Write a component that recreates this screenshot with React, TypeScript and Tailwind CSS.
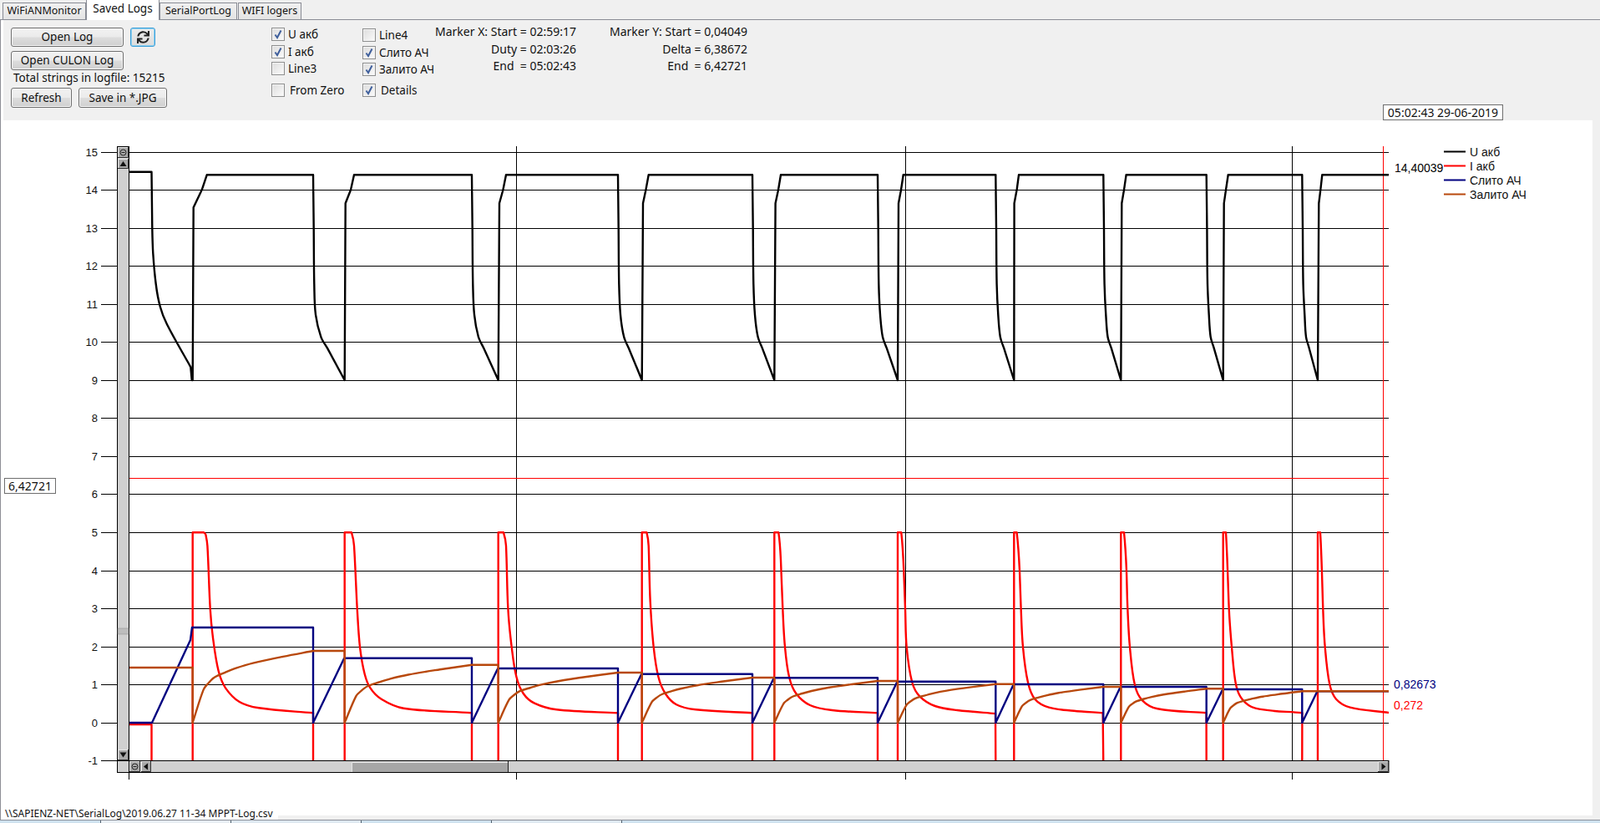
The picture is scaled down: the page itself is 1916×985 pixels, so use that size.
import { FaSync } from "react-icons/fa";

type P = [number, number];

const rises = [230.7, 412.7, 596.7, 768.7, 927.3, 1075, 1214.3, 1342.3, 1464.7, 1578];
const falls = [375, 565, 740, 901, 1051, 1192.3, 1321.3, 1444.7, 1559.3, 1663];
const blueLevels = [751, 787.7, 800, 806.7, 811.3, 815.7, 819, 822, 825, 827.3];
const orangeLevels = [779, 795.7, 805, 811, 815, 818.7, 822, 824.3, 827.3];

const redShapes: P[][] = [
  [[43, 52], [47, 60], [53, 100], [63, 325], [73, 430], [93, 550], [118, 610], [168, 660], [238, 682], [433, 700]],
  [[28, 52], [34, 100], [45, 325], [55, 463], [72, 560], [92, 610], [132, 650], [212, 683], [457, 700]],
  [[22, 52], [28, 100], [35, 325], [48, 463], [65, 570], [90, 630], [130, 665], [210, 688], [430, 700]],
  [[20, 52], [24, 100], [30, 300], [42, 463], [59, 570], [84, 630], [124, 670], [194, 688], [397, 700]],
  [[18, 52], [23, 150], [30, 325], [38, 463], [53, 570], [78, 630], [128, 672], [208, 690], [371, 700]],
  [[16, 52], [22, 190], [27, 325], [32, 463], [52, 590], [79, 640], [134, 675], [214, 690], [351, 702]],
  [[13, 52], [20, 190], [25, 325], [32, 463], [50, 590], [75, 650], [125, 680], [215, 692], [319, 700]],
  [[14, 52], [20, 190], [24, 325], [32, 463], [50, 600], [77, 655], [132, 685], [307, 700]],
  [[13, 52], [21, 325], [31, 463], [46, 598], [68, 650], [116, 683], [284, 700]],
  [[12, 52], [19, 325], [26, 463], [43, 598], [66, 650], [116, 680], [255, 699]],
];

const riseDx: number[][] = [
  [3, 33, 51], [3, 22, 34], [4, 17, 28], [4, 14, 24], [4, 14, 23],
  [3, 12, 20], [1, 10, 17], [3, 11, 19], [3, 10, 18], [4, 10, 16],
];

const orangeShape: P[] = [
  [0, 0], [0.09, 0.46], [0.13, 0.55], [0.18, 0.63], [0.27, 0.7], [0.36, 0.76], [0.5, 0.83], [0.75, 0.92], [1, 1],
];

// Chord-length Hermite through the points; continues the current path from pts[0].
function smooth(pts: P[]): string {
  let out = "";
  const tangent = (i: number): P => {
    const a = pts[Math.max(0, i - 1)];
    const b = pts[Math.min(pts.length - 1, i + 1)];
    const dx = b[0] - a[0];
    const dy = b[1] - a[1];
    const l = Math.hypot(dx, dy) || 1;
    return [dx / l, dy / l];
  };
  for (let i = 0; i < pts.length - 1; i++) {
    const p = pts[i];
    const q = pts[i + 1];
    const l = Math.hypot(q[0] - p[0], q[1] - p[1]) / 3;
    const t0 = tangent(i);
    const t1 = tangent(i + 1);
    out += ` C${(p[0] + t0[0] * l).toFixed(1)},${(p[1] + t0[1] * l).toFixed(1)} ${(q[0] - t1[0] * l).toFixed(1)},${(q[1] - t1[1] * l).toFixed(1)} ${q[0].toFixed(1)},${q[1].toFixed(1)}`;
  }
  return out;
}

const y10 = (v: number) => 190 + v / 3;

function blackPath(): string {
  let d = "M154.5,205.7 L181.5,205.7";
  const z6 = ([x, y]: P): P => [130 + x / 3, 170 + y / 3];
  d += smooth(
    ([[155, 108], [157, 310], [160, 400], [170, 510], [185, 590], [210, 655], [295, 808]] as P[]).map(z6)
  );
  d += " L229.7,455";
  rises.forEach((r, i) => {
    const dx = riseDx[i];
    d += ` L${r},455 L${(r + dx[0] / 3).toFixed(1)},${y10(i === 0 ? 175 : 160).toFixed(1)}`;
    d += ` L${(r + dx[1] / 3).toFixed(1)},${y10(112).toFixed(1)} L${(r + dx[2] / 3).toFixed(1)},209.3`;
    const f = falls[i];
    d += ` L${f},209.3`;
    if (i < rises.length - 1) {
      const nr = rises[i + 1];
      const G = nr - f;
      d += smooth([
        [f, 209.3], [f + 0.7, y10(250)], [f + 1.3, y10(450)], [f + 3, y10(560)],
        [f + 0.25 * G, y10(640)], [f + 0.45 * G, y10(680)],
      ]);
      d += ` L${nr},455`;
    }
  });
  return d;
}

function redPath(): string {
  let d = "M154.5,867 L181.5,867 L181.5,914";
  rises.forEach((r, i) => {
    const sh = redShapes[i];
    const toXY = ([dx, y]: P): P => [r + dx / 3, 620 + y / 3];
    d += ` L${r},914 L${r},637.3 L${(r + sh[0][0] / 3 - 1).toFixed(1)},637.3`;
    d += smooth(sh.map(toXY));
    if (i < rises.length - 1) d += ` L${falls[i]},914`;
  });
  return d;
}

function bluePath(): string {
  let d = "M154.5,865 L182,865 L228,766 L230,751";
  rises.forEach((r, i) => {
    const l = blueLevels[i];
    if (i > 0) d += ` L${r - 1},${l + 1} L${r},${l}`;
    d += ` L${falls[i]},${l}`;
    if (i < rises.length - 1) d += ` L${falls[i]},865`;
  });
  return d;
}

function orangePath(): string {
  let d = "M154.5,799 L230.7,799";
  orangeLevels.forEach((o, i) => {
    const r = rises[i];
    const f = falls[i];
    d += ` L${r},865`;
    d += smooth(orangeShape.map(([t, g]): P => [r + t * (f - r), 865 - g * (865 - o)]));
    if (i < orangeLevels.length - 1) d += ` L${rises[i + 1]},${o}`;
  });
  d += " L1663,827.3";
  return d;
}

const grid: [string, number][] = [
  ["15", 182], ["14", 227], ["13", 273], ["12", 318], ["11", 364], ["10", 409], ["9", 455], ["8", 500],
  ["7", 546], ["6", 591], ["5", 637], ["4", 683], ["3", 728], ["2", 774], ["1", 819], ["0", 865], ["-1", 910],
];

function SBtn({ x, y, w, h, kind }: { x: number; y: number; w: number; h: number; kind: "reset" | "up" | "down" | "left" | "right" }) {
  const cx = x + w / 2;
  const cy = y + h / 2;
  return (
    <g>
      <rect x={x} y={y} width={w} height={h} fill="#a8a8a8" />
      <path d={`M${x + 0.5},${y + h} V${y + 0.5} H${x + w}`} stroke="#e8e8e8" fill="none" />
      <path d={`M${x + w - 0.5},${y} V${y + h - 0.5} H${x}`} stroke="#303030" fill="none" />
      {kind === "reset" && (
        <g fill="none" stroke="#222">
          <circle cx={cx} cy={cy} r={3.5} />
          <path d={`M${cx - 2},${cy} H${cx + 2}`} />
        </g>
      )}
      {kind === "up" && <polygon points={`${cx - 4},${cy + 3} ${cx + 4},${cy + 3} ${cx},${cy - 3}`} fill="#111" />}
      {kind === "down" && <polygon points={`${cx - 4},${cy - 3} ${cx + 4},${cy - 3} ${cx},${cy + 3}`} fill="#111" />}
      {kind === "left" && <polygon points={`${cx + 2},${cy - 4} ${cx + 2},${cy + 4} ${cx - 3},${cy}`} fill="#111" />}
      {kind === "right" && <polygon points={`${cx - 2},${cy - 4} ${cx - 2},${cy + 4} ${cx + 3},${cy}`} fill="#111" />}
    </g>
  );
}

function Chart() {
  return (
    <svg width={1906} height={832} viewBox="1 144 1906 832" className="block bg-white" fontFamily="'Liberation Sans', Arial, sans-serif" fontSize={14}>
      <defs>
        <clipPath id="plot">
          <rect x={155} y={170} width={1508} height={740.5} />
        </clipPath>
      </defs>
      {grid.map(([label, y]) => (
        <g key={label}>
          <line x1={121} x2={1663} y1={y + 0.5} y2={y + 0.5} stroke="#000" />
          <text x={117} y={y + 5} textAnchor="end" fill="#111" fontSize={13}>{label}</text>
        </g>
      ))}
      {[154.5, 618.5, 1084.5, 1547.5].map((x) => (
        <line key={x} x1={x} x2={x} y1={175} y2={933} stroke="#000" />
      ))}
      <line x1={1656.5} x2={1656.5} y1={175} y2={911} stroke="#ff0000" />
      <line x1={155} x2={1663} y1={572.5} y2={572.5} stroke="#ff0000" />

      <g clipPath="url(#plot)" fill="none" strokeWidth={2.4} strokeLinejoin="round">
        <path d={blackPath()} stroke="#000" />
        <path d={redPath()} stroke="#ff0000" />
        <path d={bluePath()} stroke="#000080" />
        <path d={orangePath()} stroke="#b8480c" />
      </g>

      {/* vertical scroll bar */}
      <rect x={140.5} y={175.5} width={14} height={735} fill="#d0d0d0" stroke="#000" />
      <SBtn x={141} y={176} w={13} h={13} kind="reset" />
      <SBtn x={141} y={190} w={13} h={12} kind="up" />
      <rect x={141} y={752} width={13} height={7} fill="#bdbdbd" stroke="#8a8a8a" strokeWidth={0.5} />
      <SBtn x={141} y={897} w={13} h={13} kind="down" />
      {/* horizontal scroll bar */}
      <rect x={140.5} y={910.5} width={1522.5} height={14} fill="#d0d0d0" stroke="#000" />
      <line x1={154.5} x2={154.5} y1={911} y2={933} stroke="#000" />
      <line x1={618.5} x2={618.5} y1={924} y2={933} stroke="#000" />
      <SBtn x={155} y={911} w={13} h={13} kind="reset" />
      <SBtn x={169} y={911} w={12} h={13} kind="left" />
      <rect x={421} y={912} width={187} height={12} fill="#a6a6a6" />
      <path d="M421.5,924 V912.5 H608" stroke="#e4e4e4" fill="none" />
      <path d="M608.5,911 V924" stroke="#202020" fill="none" />
      <SBtn x={1650} y={911} w={13} h={13} kind="right" />

      {/* value labels */}
      <text x={1670} y={206} fill="#000">14,40039</text>
      <text x={1669} y={824} fill="#000080">0,82673</text>
      <text x={1669} y={849} fill="#ff0000">0,272</text>

      {/* legend */}
      {([
        ["U акб", "#000", 181.5],
        ["I акб", "#ff0000", 198.5],
        ["Слито АЧ", "#000080", 215.5],
        ["Залито АЧ", "#b8480c", 232.5],
      ] as [string, string, number][]).map(([t, c, y]) => (
        <g key={t}>
          <line x1={1729} x2={1755} y1={y} y2={y} stroke={c} strokeWidth={2} />
          <text x={1760} y={y + 5} fill="#111">{t}</text>
        </g>
      ))}
    </svg>
  );
}

function Tab({ label, active, className }: { label: string; active?: boolean; className: string }) {
  return (
    <div
      className={
        "flex items-center justify-center border border-[#898c95] " +
        (active
          ? "relative z-10 h-[25px] -mb-px border-b-0 bg-white pb-[3px] "
          : "h-[20px] border-b-0 bg-[linear-gradient(#f0f0f0,#e4e4e4)] text-[12.5px] ") +
        className
      }
    >
      {label}
    </div>
  );
}

function Btn({ label, className }: { label: string; className: string }) {
  return (
    <div
      className={
        "flex items-center justify-center rounded-[3px] border border-[#707070] bg-[linear-gradient(#f2f2f2_0%,#ebebeb_48%,#dddddd_52%,#cfcfcf_100%)] pt-px shadow-[inset_0_0_0_1px_#f6f6f6] " +
        className
      }
    >
      {label}
    </div>
  );
}

function Check({ label, checked, className, gap }: { label: string; checked?: boolean; className: string; gap: string }) {
  return (
    <div className={"flex h-[16px] items-center " + gap + " " + className}>
      <div className="flex h-[16px] w-[16px] shrink-0 items-center justify-center border border-[#8e8f8f] bg-[linear-gradient(135deg,#dcdcdc,#fbfbfb)] shadow-[inset_0_0_0_1px_#f4f4f4]">
        {checked && (
          <svg width="12" height="12" viewBox="0 0 12 12">
            <path d="M2.5 6.5 L5 10 L9.5 1.5" fill="none" stroke="#3f5f9c" strokeWidth="2" />
          </svg>
        )}
      </div>
      <span className="whitespace-nowrap pt-[2px]">{label}</span>
    </div>
  );
}

export default function App() {
  return (
    <div className="relative h-[985px] w-[1916px] overflow-hidden bg-[#f0f0f0] [font-family:'Liberation_Sans',Arial,sans-serif] text-[13.5px] leading-none text-[#111]">
      {/* tabs */}
      <div className="flex h-[24px] items-end border-b border-[#898c95] pl-[3px]">
        <Tab label="WiFiANMonitor" className="w-[100px]" />
        <Tab label="Saved Logs" active className="w-[88px]" />
        <Tab label="SerialPortLog" className="w-[93px]" />
        <Tab label="WIFI logers" className="ml-px w-[76px]" />
      </div>

      {/* controls */}
      <div className="flex h-[120px] border-l border-[#8e8f96]">
        <div className="w-[3px] bg-white" />
        <div className="flex flex-1 pl-[9px] pt-[9px]">
          <div className="w-[187px]">
            <div className="flex gap-[8px]">
              <Btn label="Open Log" className="h-[23px] w-[135px]" />
              <div className="flex h-[23px] w-[30px] items-center justify-center rounded-[3px] border border-[#3c9fd8] bg-[linear-gradient(#ececec,#dcdcdc)] text-[#222] shadow-[inset_0_0_0_1px_#8fd0f0]">
                <FaSync className="h-[15px] w-[15px]" />
              </div>
            </div>
            <Btn label="Open CULON Log" className="mt-[5px] h-[23px] w-[135px]" />
            <div className="mt-[2px] flex h-[15px] items-center whitespace-nowrap pl-[3px]">Total strings in logfile: 15215</div>
            <div className="mt-[4px] flex gap-[8px]">
              <Btn label="Refresh" className="h-[24px] w-[73px]" />
              <Btn label="Save in *.JPG" className="h-[24px] w-[106px]" />
            </div>
          </div>

          <div className="ml-[125px] w-[109px]">
            <Check label="U акб" checked className="" gap="gap-[4px]" />
            <Check label="I акб" checked className="mt-[5px]" gap="gap-[4px]" />
            <Check label="Line3" className="mt-[4px]" gap="gap-[4px]" />
            <Check label="From Zero" className="mt-[10px]" gap="gap-[6px]" />
          </div>

          <div className="w-[89px] pt-px">
            <Check label="Line4" className="" gap="gap-[4px]" />
            <Check label="Слито АЧ" checked className="mt-[5px]" gap="gap-[4px]" />
            <Check label="Залито АЧ" checked className="mt-[4px]" gap="gap-[4px]" />
            <Check label="Details" checked className="mt-[9px]" gap="gap-[6px]" />
          </div>

          <div className="-mt-[2px] w-[167px] whitespace-pre text-right text-[14px]">
            <div className="flex h-[14px] items-center justify-end">Marker X: Start = 02:59:17</div>
            <div className="mt-[7px] flex h-[14px] items-center justify-end">Duty = 02:03:26</div>
            <div className="mt-[6px] flex h-[14px] items-center justify-end">End  = 05:02:43</div>
          </div>

          <div className="-mt-[2px] ml-[42px] w-[163px] whitespace-pre text-right text-[14px]">
            <div className="flex h-[14px] items-center justify-end">Marker Y: Start = 0,04049</div>
            <div className="mt-[7px] flex h-[14px] items-center justify-end">Delta = 6,38672</div>
            <div className="mt-[6px] flex h-[14px] items-center justify-end">End  = 6,42721</div>
          </div>
        </div>
      </div>

      {/* chart */}
      <div className="h-[832px] w-[1907px] border-l border-[#8e8f96]">
        <Chart />
      </div>

      {/* bottom strip */}
      <div className="h-[5px] border-l border-[#8e8f96]" />
      <div className="h-px bg-[#8f939c]" />
      <div className="flex h-[3px] gap-px bg-[#50606e]">
        <div className="w-[120px] bg-[#cfe2ef]" />
        <div className="w-[155px] bg-[#e8eef3]" />
        <div className="w-[155px] bg-[#dfe9f1]" />
        <div className="w-[155px] bg-[#cfe2ef]" />
        <div className="w-[155px] bg-[#dfe9f1]" />
        <div className="flex-1 bg-[#cfe2ef]" />
      </div>

      {/* overlays */}
      <div className="absolute left-[1656px] top-[125px] flex h-[19px] w-[144px] items-center justify-center border border-[#6e6e6e] bg-white text-[14px] text-[#111]">
        05:02:43 29-06-2019
      </div>
      <div className="absolute left-[5px] top-[572px] flex h-[19px] w-[62px] items-center justify-center border border-[#6e6e6e] bg-white text-[14px] text-[#111]">
        6,42721
      </div>
      <div className="absolute left-[1px] top-[966px] flex h-[15px] w-[332px] items-center whitespace-nowrap bg-white pl-[5px] text-[12px]">
        \\SAPIENZ-NET\SerialLog\2019.06.27 11-34 MPPT-Log.csv
      </div>
    </div>
  );
}
